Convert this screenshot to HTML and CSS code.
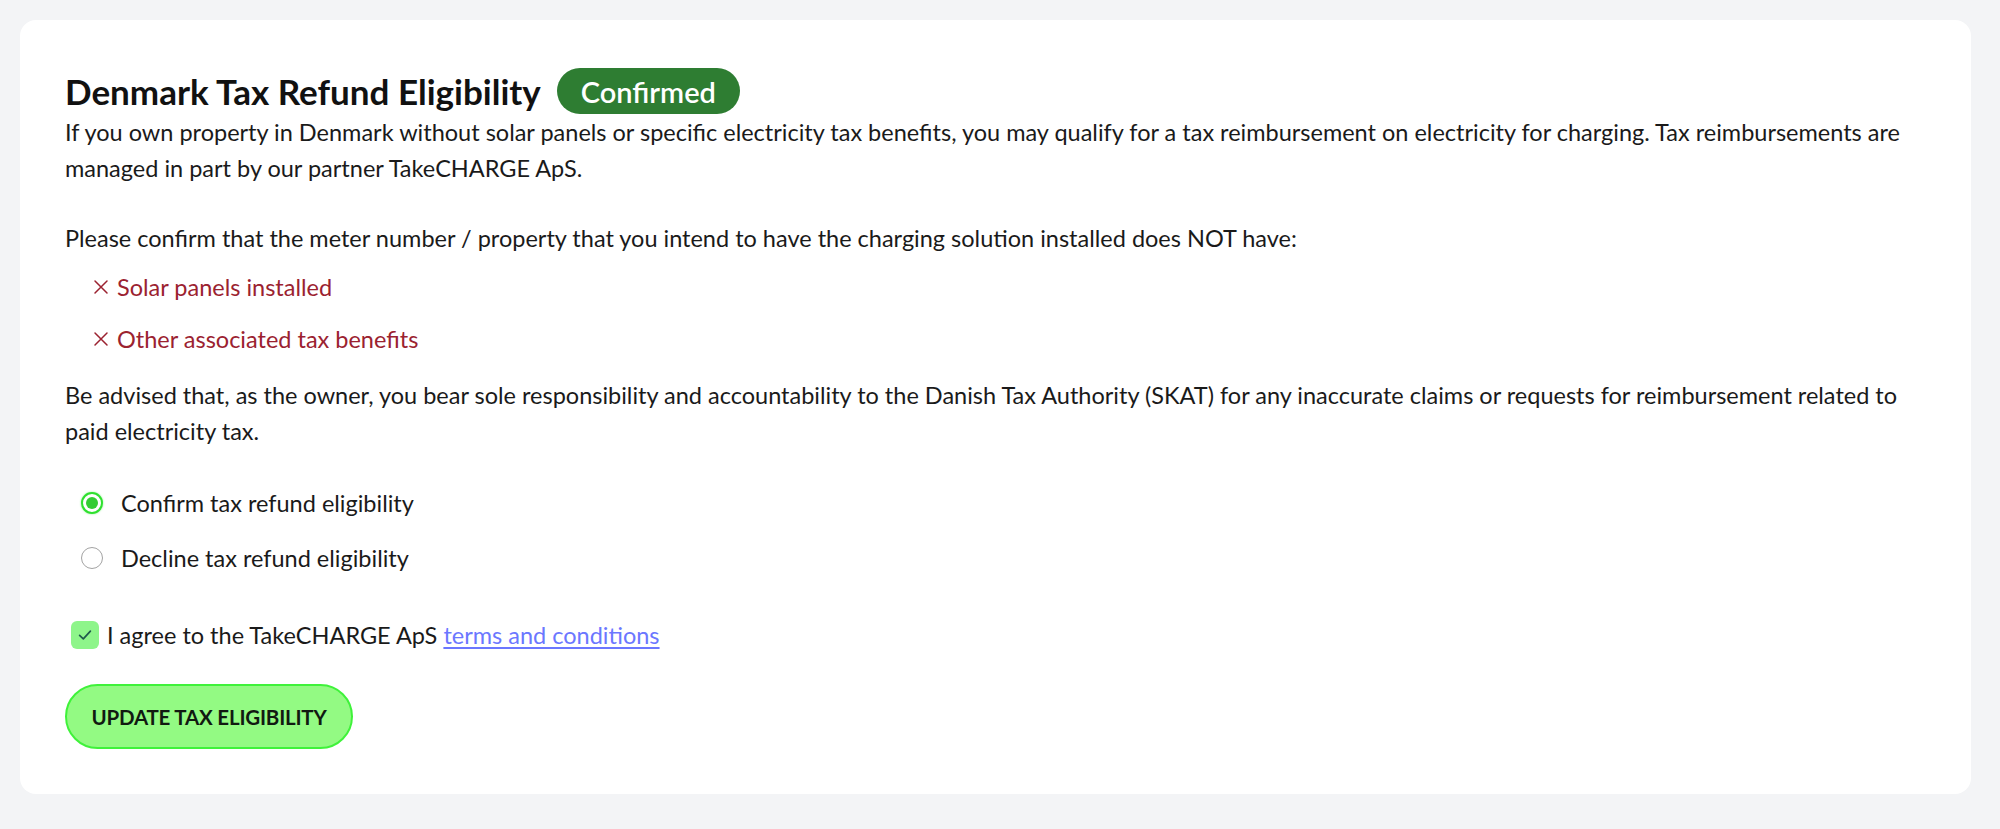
FILE: index.html
```html
<!DOCTYPE html>
<html lang="en">
<head>
<meta charset="utf-8">
<title>Denmark Tax Refund Eligibility</title>
<link rel="stylesheet" href="styles.css">
</head>
<body>
<main class="page">
  <section class="card">
    <header class="card-header">
      <h1 class="title">Denmark Tax Refund Eligibility</h1>
      <span class="badge">Confirmed</span>
    </header>
    <p class="text">If you own property in Denmark without solar panels or specific electricity tax benefits, you may qualify for a tax reimbursement on electricity for charging. Tax reimbursements are managed in part by our partner TakeCHARGE ApS.</p>
    <p class="text spaced">Please confirm that the meter number / property that you intend to have the charging solution installed does NOT have:</p>
    <ul class="no-list">
      <li class="no-item"><svg class="cross" viewBox="0 0 16 16" width="16" height="16"><path d="M2 2 L14 14 M14 2 L2 14" stroke="#9b2230" stroke-width="1.5" stroke-linecap="round" fill="none"/></svg>Solar panels installed</li>
      <li class="no-item"><svg class="cross" viewBox="0 0 16 16" width="16" height="16"><path d="M2 2 L14 14 M14 2 L2 14" stroke="#9b2230" stroke-width="1.5" stroke-linecap="round" fill="none"/></svg>Other associated tax benefits</li>
    </ul>
    <p class="text advised">Be advised that, as the owner, you bear sole responsibility and accountability to the Danish Tax Authority (SKAT) for any inaccurate claims or requests for reimbursement related to paid electricity tax.</p>
    <div class="radios">
      <label class="radio"><span class="radio-mark checked"></span>Confirm tax refund eligibility</label>
      <label class="radio"><span class="radio-mark"></span>Decline tax refund eligibility</label>
    </div>
    <label class="agree">
      <span class="checkbox">
        <svg viewBox="0 0 16 16" width="18" height="18"><path d="M3.2 8.4 L6.5 11.5 L12.8 4.6" fill="none" stroke="#1f5a4c" stroke-width="1.5" stroke-linecap="round" stroke-linejoin="round"/></svg>
      </span>
      <span>I agree to the TakeCHARGE ApS <a class="link" href="#">terms and conditions</a></span>
    </label>
    <button class="btn" type="button">UPDATE TAX ELIGIBILITY</button>
  </section>
</main>
</body>
</html>
```
FILE: styles.css
```css
html, body {
  margin: 0;
  padding: 0;
}
body {
  background: #f3f4f6;
  font-family: "Lato", "Noto Sans", sans-serif;
  color: #1a1a1a;
}
.page {
  padding: 20px 29px 36px 20px;
}
.card {
  background: #ffffff;
  border-radius: 16px;
  padding: 48px 45px 45px 45px;
}
.card-header {
  display: flex;
  align-items: center;
  gap: 16px;
}
.title {
  margin: 0;
  font-size: 35px;
  font-weight: 700;
  color: #111111;
  line-height: 46px;
}
.badge {
  display: inline-flex;
  align-items: center;
  height: 46px;
  padding: 0 24px;
  border-radius: 23px;
  background: #2e7d32;
  color: #ffffff;
  font-size: 29px;
  font-weight: 600;
}
.text {
  margin: 0;
  font-size: 23.5px;
  line-height: 36px;
  color: #1a1a1a;
}
.spaced {
  margin-top: 34px;
}
.no-list {
  list-style: none;
  margin: 13px 0 0 0;
  padding: 0 0 0 28px;
  display: flex;
  flex-direction: column;
  gap: 16px;
}
.no-item {
  display: flex;
  align-items: center;
  font-size: 23.5px;
  line-height: 36px;
  color: #9b2230;
}
.cross {
  margin-right: 8px;
}
.advised {
  margin-top: 20px;
}
.radios {
  margin-top: 36px;
  padding-left: 16px;
  display: flex;
  flex-direction: column;
  gap: 19px;
}
.radio {
  display: flex;
  align-items: center;
  gap: 18px;
  font-size: 23.5px;
  line-height: 36px;
}
.radio-mark {
  box-sizing: border-box;
  width: 22px;
  height: 22px;
  border-radius: 50%;
  border: 1.5px solid #a3a3a3;
  background: #ffffff;
  position: relative;
}
.radio-mark.checked {
  border: 2px solid #2fe02f;
  box-shadow: 0 0 2px rgba(60, 230, 60, 0.6);
}
.radio-mark.checked::after {
  content: "";
  position: absolute;
  left: 3px;
  top: 3px;
  width: 12px;
  height: 12px;
  border-radius: 50%;
  background: #33cc33;
}
.agree {
  margin-top: 41px;
  padding-left: 6px;
  display: flex;
  align-items: center;
  gap: 8px;
  font-size: 23.5px;
  line-height: 36px;
}
.checkbox {
  width: 28px;
  height: 28px;
  border-radius: 6px;
  background: #8ef58a;
  display: flex;
  align-items: center;
  justify-content: center;
}
.link {
  color: #6b77ff;
  text-decoration: underline;
  text-underline-offset: 3px;
}
.btn {
  display: block;
  margin-top: 31px;
  width: 288px;
  height: 65px;
  border-radius: 33px;
  border: 2px solid #3ff23a;
  background: #93fa83;
  color: #111a11;
  font-family: "Lato", "Noto Sans", sans-serif;
  font-size: 20.5px;
  font-weight: 700;
  letter-spacing: -0.2px;
  padding: 0;
}
```
